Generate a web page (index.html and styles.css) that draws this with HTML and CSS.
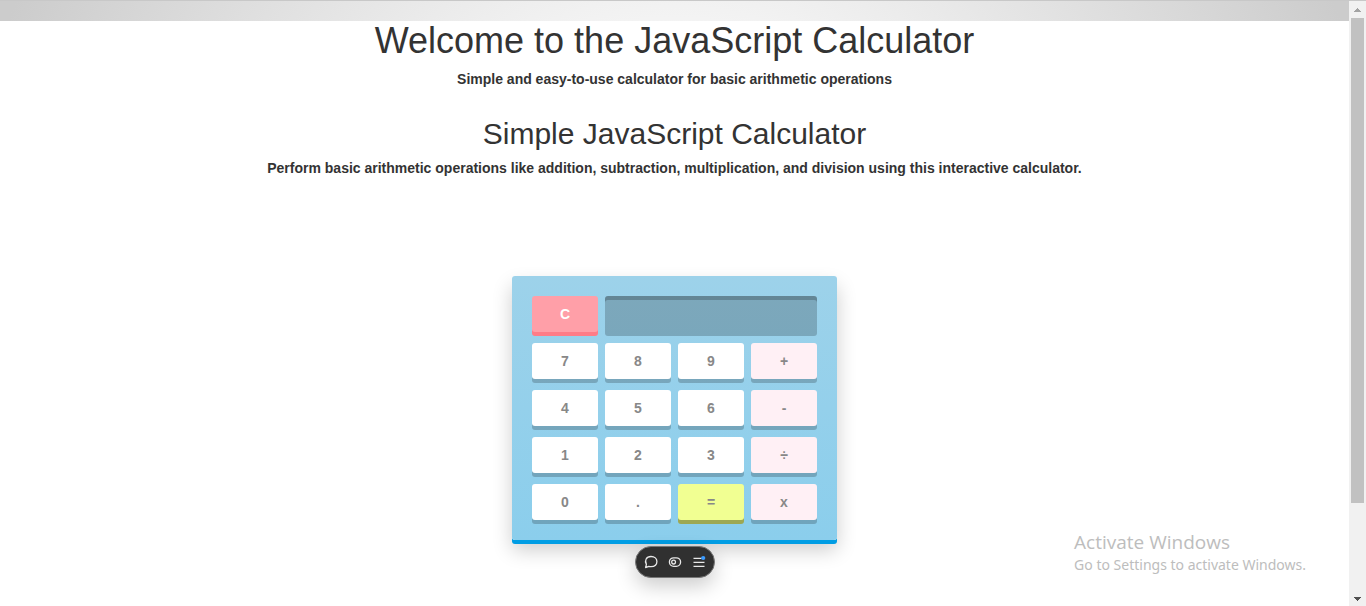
FILE: index.html
```html
<!DOCTYPE html>
<html lang="en">
<head>
<meta charset="utf-8">
<title>JavaScript Calculator</title>
<link rel="stylesheet" href="styles.css">
</head>
<body>
<div class="page">
  <div class="banner"></div>
  <header class="intro">
    <h1 class="title">Welcome to the JavaScript Calculator</h1>
    <p class="lead">Simple and easy-to-use calculator for basic arithmetic operations</p>
  </header>
  <main>
    <section class="intro">
      <h2 class="subtitle">Simple JavaScript Calculator</h2>
      <p class="lead">Perform basic arithmetic operations like addition, subtraction, multiplication, and division using this interactive calculator.</p>
    </section>
    <form class="calculator">
      <button type="button" class="key key-clear">C</button>
      <input class="screen" type="text" aria-label="Result" readonly>
      <button type="button" class="key">7</button>
      <button type="button" class="key">8</button>
      <button type="button" class="key">9</button>
      <button type="button" class="key key-operator">+</button>
      <button type="button" class="key">4</button>
      <button type="button" class="key">5</button>
      <button type="button" class="key">6</button>
      <button type="button" class="key key-operator">-</button>
      <button type="button" class="key">1</button>
      <button type="button" class="key">2</button>
      <button type="button" class="key">3</button>
      <button type="button" class="key key-operator">÷</button>
      <button type="button" class="key">0</button>
      <button type="button" class="key">.</button>
      <button type="button" class="key key-equals">=</button>
      <button type="button" class="key key-operator">x</button>
    </form>
  </main>
  <div class="toolbar">
    <button type="button" class="tool" aria-label="Comment">
      <svg width="16" height="16" viewBox="0 0 16 16" fill="none" stroke="#e8e8e8" stroke-width="1.3" stroke-linejoin="round"><path d="M2.6 13.6 3.4 10.3C1.2 6.6 3.4 2.5 8 2.5c3.6 0 5.9 2.2 5.9 5.1 0 3.1-2.4 5.1-5.9 5.1-.8 0-1.5-.1-2.2-.4z"/></svg>
    </button>
    <button type="button" class="tool" aria-label="Toggle draft mode">
      <svg width="16" height="16" viewBox="0 0 16 16" fill="none" stroke="#e8e8e8" stroke-width="1.3"><rect x="2.4" y="3.8" width="11.2" height="8.6" rx="4.3"/><circle cx="6.6" cy="8.1" r="1.9"/></svg>
    </button>
    <button type="button" class="tool" aria-label="Menu">
      <svg width="16" height="16" viewBox="0 0 16 16" fill="none" stroke="#e8e8e8" stroke-width="1.3"><path d="M2.5 4.4h8M2.5 8.3h11M2.5 12.3h11"/><circle cx="12.2" cy="4" r="2.1" fill="#3b9bff" stroke="none"/></svg>
    </button>
  </div>
  <aside class="notice">
    <div class="notice-title">Activate Windows</div>
    <div class="notice-text">Go to Settings to activate Windows.</div>
  </aside>
</div>
<div class="scrollbar" aria-hidden="true">
  <svg class="arrow" viewBox="0 0 17 17"><path d="M8 7h1v1h1v1h1v1h1v1H5v-1h1V9h1V8h1z" fill="#a3a3a3"/></svg>
  <div class="track"><div class="thumb"></div></div>
  <svg class="arrow" viewBox="0 0 17 17"><path d="M5 8h7v1h-1v1h-1v1H9v1H8v-1H7v-1H6V9H5z" fill="#505050"/></svg>
</div>
</body>
</html>
```
FILE: styles.css
```css
* {
  box-sizing: border-box;
}

body {
  margin: 0;
  display: flex;
  height: 100vh;
  overflow: hidden;
  background: #fff;
  border-top: 1px solid #c8c8c8;
  font: 14px/20px "Liberation Sans", Arial, sans-serif;
  color: #333;
}

.page {
  position: relative;
  flex: 1;
  min-width: 0;
}

.banner {
  height: 20px;
  background: radial-gradient(circle at 50% 300px, #fff 20%, #ccc 98%);
}

.intro {
  text-align: center;
  margin-bottom: 28px;
}

.title,
.subtitle {
  margin: 0 0 8px;
  font-weight: 400;
}

.title {
  font-size: 36px;
  line-height: 40px;
}

.subtitle {
  font-size: 30px;
  line-height: 33px;
}

.lead {
  margin: 0;
  font-weight: 700;
}

.calculator {
  display: grid;
  grid-template-columns: repeat(4, 66px);
  gap: 7px;
  width: max-content;
  margin: 98px auto 0;
  padding: 20px 20px 16px;
  border-radius: 3px;
  background: linear-gradient(#9dd2ea, #8bceec);
  box-shadow: 0 4px #009de4, 0 10px 20px rgba(0, 0, 0, 0.2);
}

.key {
  height: 36px;
  margin-bottom: 4px;
  padding: 0;
  border: 0;
  border-radius: 3px;
  background: #fff;
  box-shadow: 0 4px rgba(0, 0, 0, 0.2);
  color: #888;
  font: 700 14px/36px "Liberation Sans", Arial, sans-serif;
}

.key-clear {
  background: #ff9fa8;
  box-shadow: 0 4px #ff7c87;
  color: #fff;
}

.key-operator {
  background: #fff0f5;
}

.key-equals {
  background: #f1ff92;
  box-shadow: 0 4px #9da853;
}

.screen {
  grid-column: span 3;
  width: 100%;
  height: 40px;
  padding: 0 10px;
  border: 0;
  border-radius: 3px;
  background: rgba(0, 0, 0, 0.2);
  box-shadow: inset 0 4px rgba(0, 0, 0, 0.2);
}

.toolbar {
  position: absolute;
  bottom: 28px;
  left: 50%;
  transform: translateX(-50%);
  display: flex;
  padding: 3px;
  border: 1px solid #777;
  border-radius: 16px;
  background: #303030;
  box-shadow: 0 8px 20px rgba(0, 0, 0, 0.2);
}

.tool {
  display: grid;
  place-items: center;
  width: 24px;
  height: 24px;
  padding: 0;
  border: 0;
  background: none;
}

.notice {
  position: absolute;
  right: 43px;
  bottom: 31px;
  color: #bdbdbd;
  font-family: "Open Sans", "Noto Sans", sans-serif;
}

.notice-title {
  font-size: 19px;
  line-height: 25px;
}

.notice-text {
  font-family: "Noto Sans", "Open Sans", sans-serif;
  font-size: 14px;
  line-height: 20px;
}

.scrollbar {
  display: flex;
  flex-direction: column;
  width: 17px;
  background: #f1f1f1;
}

.arrow {
  width: 17px;
  height: 17px;
}

.track {
  flex: 1;
  padding: 0 2px;
}

.thumb {
  height: 85%;
  background: #c1c1c1;
}
```
